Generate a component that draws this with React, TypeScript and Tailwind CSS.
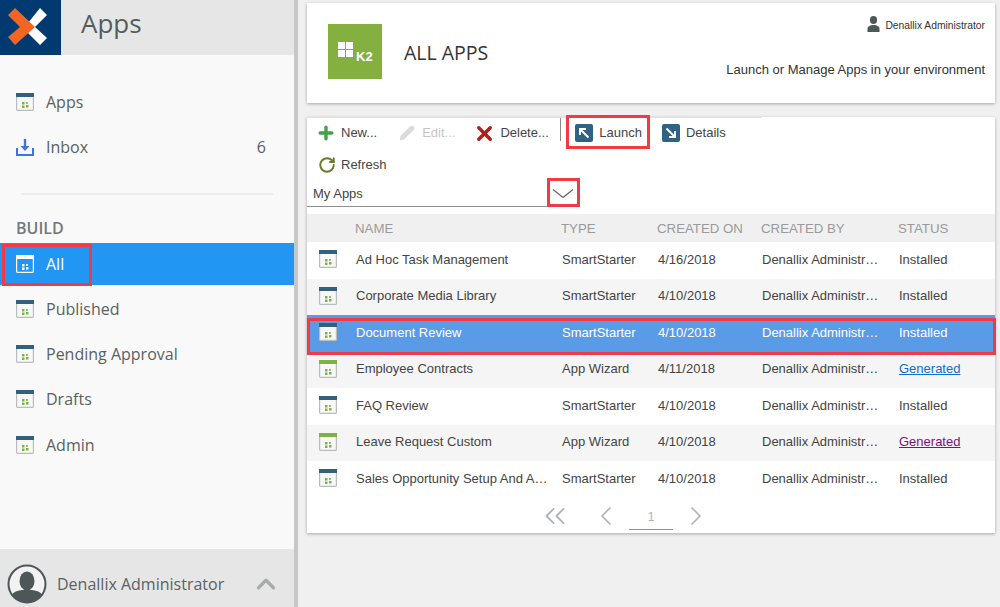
import { ChevronUp, ChevronLeft, ChevronRight, ChevronsLeft, Plus, Pencil, X, RotateCw } from "lucide-react";

const apps = [
  { name: "Ad Hoc Task Management", type: "SmartStarter", date: "4/16/2018", status: "Installed" },
  { name: "Corporate Media Library", type: "SmartStarter", date: "4/10/2018", status: "Installed" },
  { name: "Document Review", type: "SmartStarter", date: "4/10/2018", status: "Installed", selected: true },
  { name: "Employee Contracts", type: "App Wizard", date: "4/11/2018", status: "Generated", green: true, link: "text-[#0b6fd0]" },
  { name: "FAQ Review", type: "SmartStarter", date: "4/10/2018", status: "Installed" },
  { name: "Leave Request Custom", type: "App Wizard", date: "4/10/2018", status: "Generated", green: true, link: "text-[#800f80]" },
  { name: "Sales Opportunity Setup And Approval", type: "SmartStarter", date: "4/10/2018", status: "Installed" },
];

function AppIcon({ bar = "#34607f", green = "#7cb342", body = "#f8f8f8", edge = "#b9bdbd" }) {
  return (
    <svg width="18" height="18" viewBox="0 0 18 18" className="shrink-0">
      <rect x="0.6" y="0.6" width="16.8" height="16.8" rx="1" fill={body} stroke={edge} strokeWidth="1.2" />
      <rect x="0" y="0" width="18" height="4" fill={bar} />
      <rect x="6" y="9" width="2.5" height="2.5" fill={green} />
      <rect x="10" y="9" width="1.8" height="1.8" fill={green} />
      <rect x="6" y="12.5" width="2.5" height="2.5" fill={green} />
      <rect x="10" y="12" width="2.5" height="2.5" fill={green} />
    </svg>
  );
}

function NavItem({ label, count }: { label: string; count?: string }) {
  return (
    <div className="h-[45.3px] flex items-center pl-4 pr-7 text-[16px] text-[#5a6263]">
      {label === "Inbox" ? (
        <svg width="18" height="18" viewBox="0 0 18 18" className="shrink-0">
          <path d="M1 10v7h16v-7" fill="none" stroke="#3f74d8" strokeWidth="2" />
          <path d="M9 1v8" stroke="#3f74d8" strokeWidth="2.4" />
          <path d="M4.5 8h9L9 13z" fill="#3f74d8" />
        </svg>
      ) : (
        <AppIcon />
      )}
      <span className="ml-3">{label}</span>
      {count && <span className="ml-auto">{count}</span>}
    </div>
  );
}

function ArrowBox({ d }: { d: string }) {
  return (
    <svg width="18" height="18" viewBox="0 0 18 18" className="shrink-0">
      <rect width="18" height="18" rx="2" fill="#2f6283" />
      <path d={d} fill="none" stroke="#fff" strokeWidth="2" />
    </svg>
  );
}

export default function App() {
  return (
    <div className="relative flex h-[607px] w-[1000px] overflow-hidden bg-[#f0f0f0]">
      {/* Sidebar */}
      <aside className="flex flex-col w-[298px] shrink-0 bg-[#f9f9f9] border-r-[4px] border-[#c6c8c8] [font-family:Open_Sans,sans-serif]">
        <div className="flex h-[55px] bg-[#e6e6e6]">
          <div className="w-[61px] bg-[#003a70]">
            <svg width="61" height="55" viewBox="0 0 61 55">
              <path d="M28 23L40 8l7 7-12 12 12 11-7 7-12-12z" fill="#fff" />
              <path d="M15 8l20 19-20 18-7-8 12-10L8 15z" fill="#f26522" />
            </svg>
          </div>
          <div className="ml-5 text-[26px] leading-[47px] text-[#545c5d]">Apps</div>
        </div>

        <div className="pt-[24px]">
          <NavItem label="Apps" />
          <NavItem label="Inbox" count="6" />
        </div>
        <div className="mx-[21px] mt-[23px] h-[2px] bg-[#ececec]" />
        <div className="pl-4 pt-[22px] pb-[4px] text-[16px] leading-[22px] font-semibold text-[#71787a]">BUILD</div>

        <div className="h-[42px] flex items-center pl-4 text-[16px] text-white bg-[#2196f3]">
          <AppIcon bar="#ffffff" green="#ffffff" body="#2196f3" edge="#ffffff" />
          <span className="ml-3">All</span>
        </div>
        <div className="pt-[1.5px]">
          <NavItem label="Published" />
          <NavItem label="Pending Approval" />
          <NavItem label="Drafts" />
          <NavItem label="Admin" />
        </div>

        <div className="mt-auto h-[58px] flex items-center bg-[#e6e6e6] pl-[7px] pr-[13px] pt-[11px] text-[16px] text-[#5a6263]">
          <svg width="40" height="40" viewBox="0 0 40 40" className="shrink-0">
            <circle cx="20" cy="20" r="18.5" fill="#f2f2f2" stroke="#4d5759" strokeWidth="2" />
            <ellipse cx="20" cy="17" rx="7.5" ry="9.5" fill="#4d5759" />
            <path d="M5 31c3-5 9-5 15-5s12 0 15 5c-3 5-9 7.5-15 7.5S8 36 5 31z" fill="#4d5759" />
          </svg>
          <span className="ml-[10px]">Denallix Administrator</span>
          <ChevronUp className="ml-auto text-[#a8abab]" size={30} strokeWidth={2.6} />
        </div>
      </aside>

      {/* Main */}
      <main className="flex-1 pl-[9px] pr-[5px] pt-[3px] [font-family:Liberation_Sans,Arial,sans-serif]">
        <header className="relative flex items-center h-[100px] bg-white shadow-[0_1px_3px_rgba(0,0,0,0.3)] pl-[21px]">
          <div className="relative w-[54px] h-[55px] mb-[3px] bg-[#84b03f]">
            <div className="absolute left-[10px] top-[18px] grid grid-cols-2 gap-[1px]">
              <span className="w-[7px] h-[7px] bg-white" />
              <span className="w-[7px] h-[7px] bg-white" />
              <span className="w-[7px] h-[7px] bg-white" />
              <span className="w-[7px] h-[7px] bg-white" />
            </div>
            <span className="absolute left-[28px] top-[26px] text-[13px] leading-[14px] font-bold text-white">K2</span>
          </div>
          <h1 className="ml-[22px] [font-family:Open_Sans,sans-serif] text-[19.5px] text-[#333]">ALL APPS</h1>
          <div className="absolute right-[10px] top-[13px] flex items-center text-[10.3px] text-[#333]">
            <svg width="13" height="16" viewBox="0 0 12 16" className="mr-[5px] mb-[4px]">
              <ellipse cx="6" cy="4" rx="3.6" ry="4" fill="#4d5759" />
              <path d="M0 16v-3c0-3 3-4 6-4s6 1 6 4v3z" fill="#4d5759" />
            </svg>
            Denallix Administrator
          </div>
          <div className="absolute right-[10px] top-[57px] text-[13px] text-[#333]">Launch or Manage Apps in your environment</div>
        </header>

        <section className="relative mt-[14px] h-[416px] bg-white shadow-[0_1px_3px_rgba(0,0,0,0.3)] text-[13px] text-[#444]">
          {/* Toolbar */}
          <div className="flex items-center h-[31px] w-[455px] border-t border-[#e2e2e2] pl-[10px]">
            <Plus size={20} strokeWidth={4} className="shrink-0 text-[#43a047] -ml-[1px]" />
            <span className="ml-[5px]">New...</span>
            <Pencil size={16} className="shrink-0 ml-[22px] text-[#dcdcdc]" fill="#dcdcdc" />
            <span className="ml-[7px] text-[#c6c6c6]">Edit...</span>
            <X size={23} strokeWidth={3.6} className="shrink-0 ml-[18px] text-[#b71c1c]" />
            <span className="ml-[4px]">Delete...</span>
            <div className="ml-[11px] -mt-[8px] w-[1.5px] h-[23px] shrink-0 bg-[#8a8a8a]" />
            <div className="ml-[14px] flex items-center">
              <ArrowBox d="M13.5 13.5L5 5M5 11V5h6" />
              <span className="ml-[6px]">Launch</span>
            </div>
            <div className="ml-[20px] flex items-center">
              <ArrowBox d="M4.5 4.5L13 13M13 7v6H7" />
              <span className="ml-[6px]">Details</span>
            </div>
          </div>
          <div className="flex items-center h-[32px] pl-[11px] pt-[1px]">
            <RotateCw size={18} strokeWidth={2.6} className="text-[#6b7a2c]" />
            <span className="ml-[5px]">Refresh</span>
          </div>
          <div className="flex items-center justify-between w-[270px] h-[27px] pl-[6px] pr-[3px] pt-[1px] border-b border-[#8f8f8f]">
            <span>My Apps</span>
            <svg width="22" height="11" viewBox="0 0 22 11">
              <path d="M1 1.5L11 9.5L21 1.5" fill="none" stroke="#666" strokeWidth="1.3" />
            </svg>
          </div>

          {/* Table */}
          <div className="mt-[7px] pt-[1px] grid grid-cols-[48px_206px_96px_104px_137px_1fr] items-center h-[28px] bg-[#f0f0f0] text-[13.25px] text-[#9a9a9a]">
            <span />
            <span>NAME</span>
            <span>TYPE</span>
            <span>CREATED ON</span>
            <span>CREATED BY</span>
            <span>STATUS</span>
          </div>
          {apps.map((app, i) => (
            <div
              key={app.name}
              className={`grid grid-cols-[48px_206px_96px_104px_137px_1fr] items-center h-[36.5px] pb-[2px] ${
                app.selected ? "bg-[#5a9be8] text-white" : i % 2 ? "bg-[#f5f5f5]" : "bg-white"
              }`}
            >
              <div className="pl-[12px]">
                <AppIcon bar={app.green ? "#7cb342" : "#34607f"} />
              </div>
              <span className="pl-[1px] pr-[13px] truncate">{app.name}</span>
              <span className="pl-[1px]">{app.type}</span>
              <span className="pl-[1px]">{app.date}</span>
              <span className="pl-[1px] pr-[16px] truncate">Denallix Administrator</span>
              <span className={`pl-[1px] ${app.link ? `underline ${app.link}` : ""}`}>{app.status}</span>
            </div>
          ))}

          {/* Pager */}
          <div className="flex items-center h-[36px] text-[#b0b3b5]">
            <ChevronsLeft size={34} strokeWidth={1.3} className="shrink-0 ml-[231px]" />
            <ChevronLeft size={32} strokeWidth={1.3} className="shrink-0 ml-[18px]" />
            <span className="ml-[7px] w-[44px] pt-[3px] h-[28px] border-b border-[#8f8f8f] text-center text-[12px] leading-[24px]">1</span>
            <ChevronRight size={32} strokeWidth={1.3} className="shrink-0 ml-[7px]" />
          </div>

          {/* Red callouts */}
          <div className="absolute left-[259px] top-[-2px] w-[84px] h-[34px] border-[3px] border-[#f03a47]" />
          <div className="absolute left-[240px] top-[61px] w-[33px] h-[29px] border-[3px] border-[#f03a47]" />
          <div className="absolute left-0 top-[201px] w-[689px] h-[37px] border-[3px] border-[#f03a47]" />
        </section>
      </main>

      <div className="absolute left-[2px] top-[244px] w-[90px] h-[42px] border-[3px] border-[#f03a47]" />
    </div>
  );
}
